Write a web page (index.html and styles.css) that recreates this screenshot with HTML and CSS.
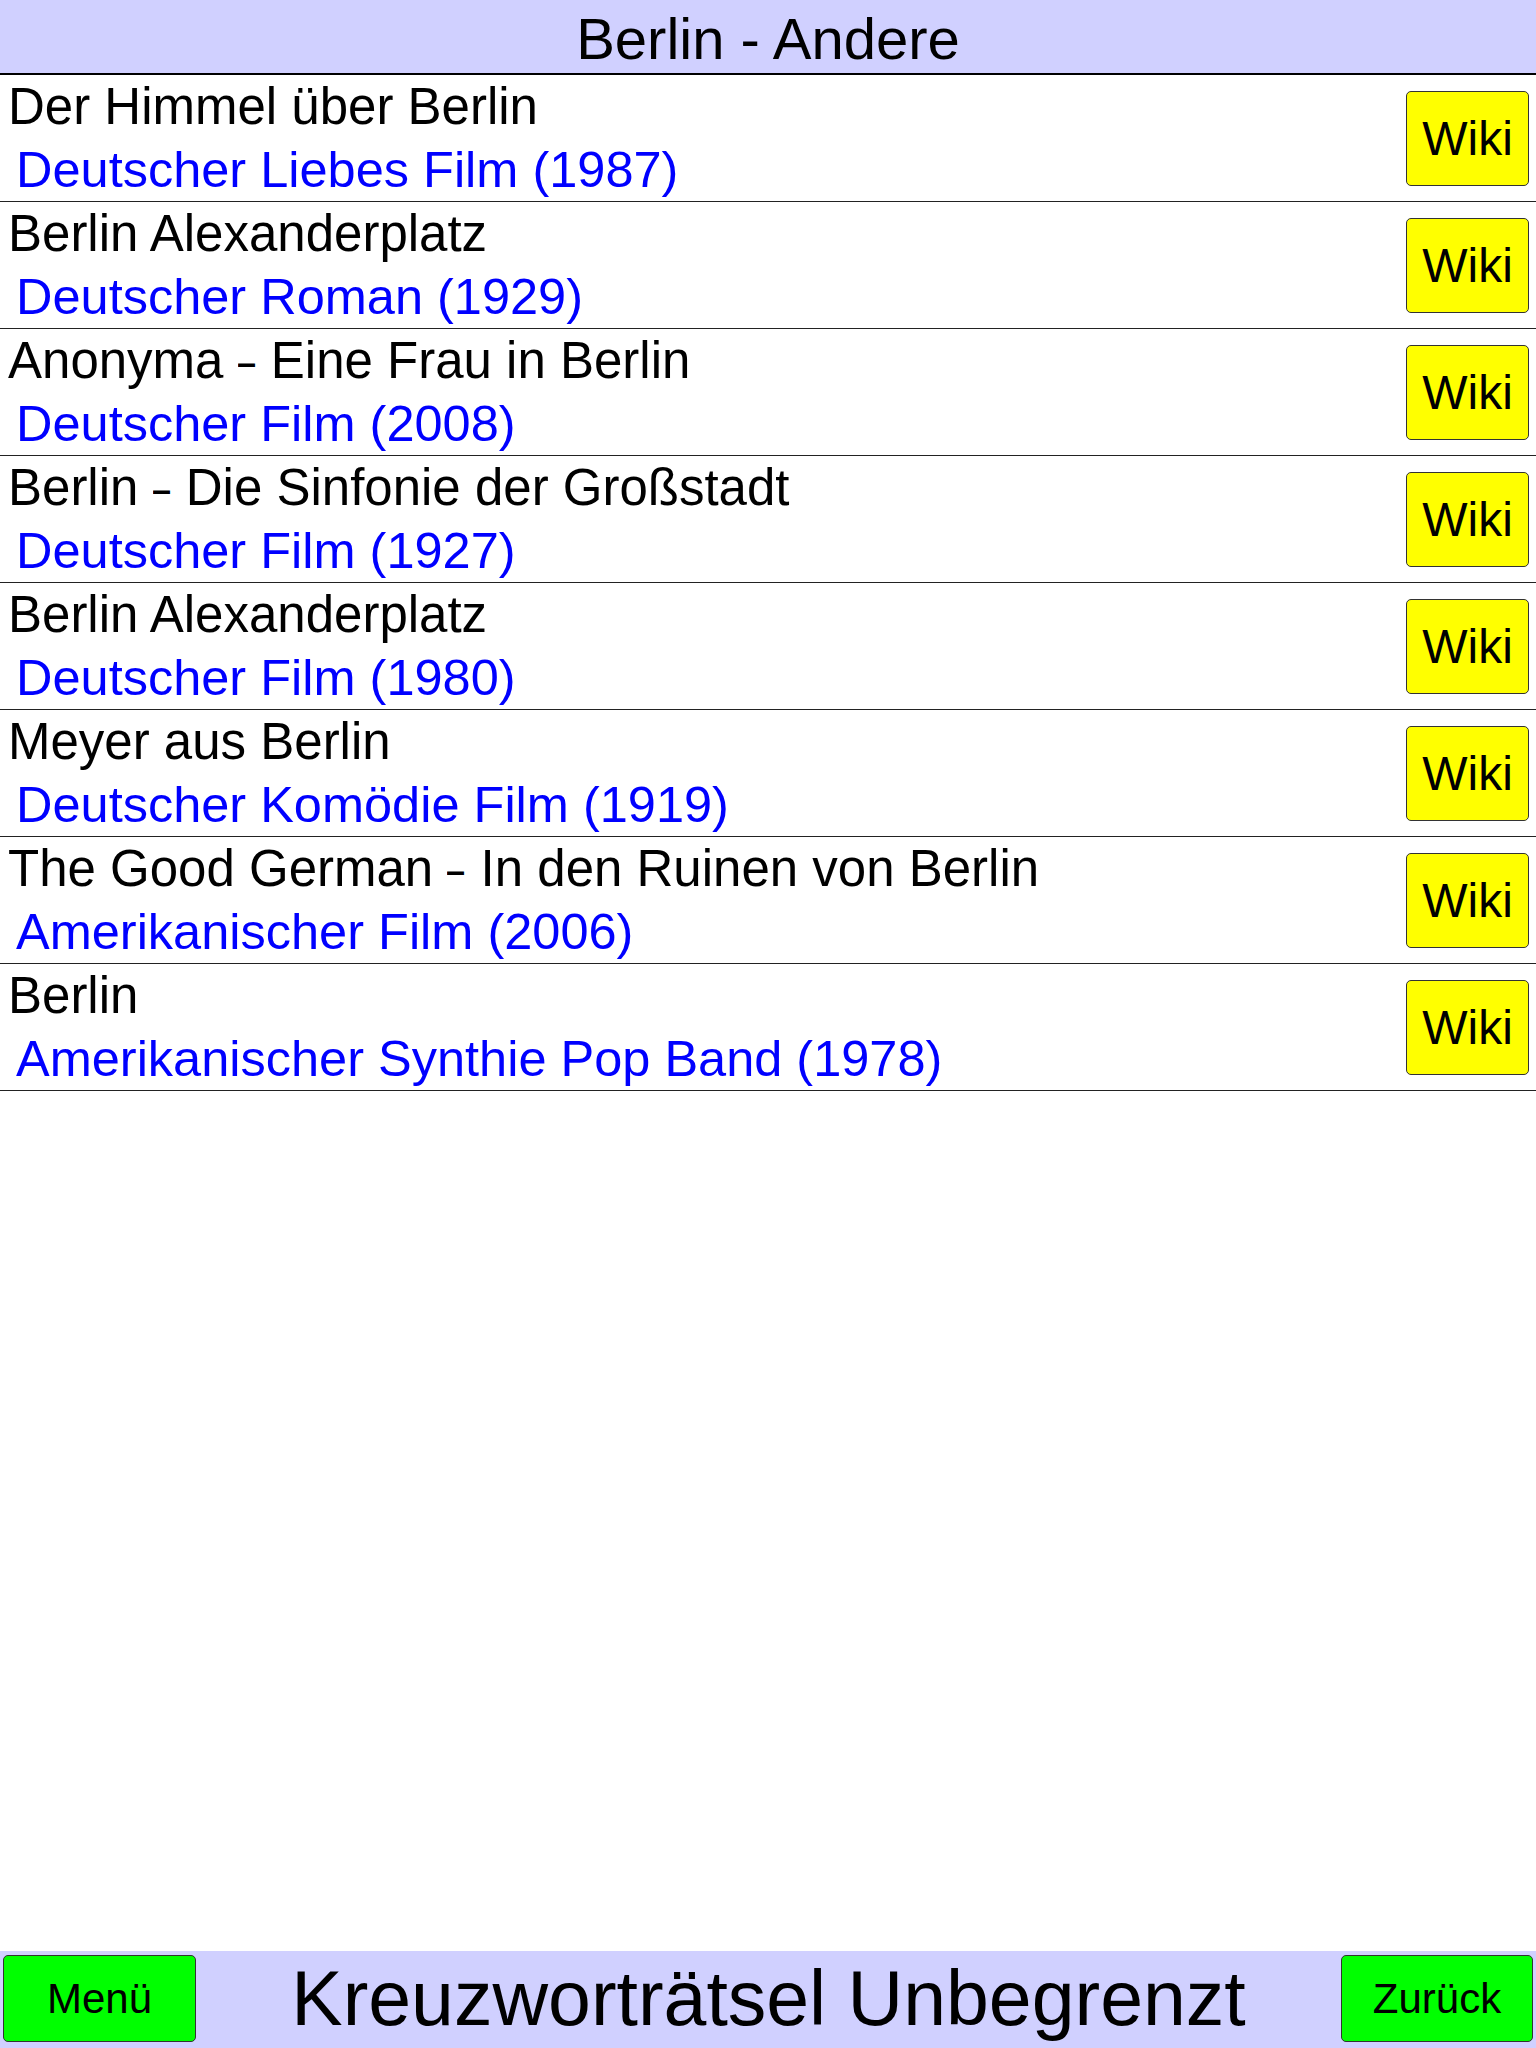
FILE: index.html
```html
<!DOCTYPE html>
<html lang="de">
<head>
    <meta charset="UTF-8">
    <meta name="viewport" content="width=device-width, initial-scale=1.0">
    <title>Berlin - Andere</title>
    <link rel="stylesheet" href="styles.css">
</head>
<body>
    <div class="page">
        <div class="top-bar">Berlin - Andere</div>

        <div class="entry-list">
            <div class="entry">
                <div class="entry-text">
                    <div class="entry-title">Der Himmel über Berlin</div>
                    <div class="entry-info">Deutscher Liebes Film (1987)</div>
                </div>
                <button class="wiki-button">Wiki</button>
            </div>
            <div class="entry">
                <div class="entry-text">
                    <div class="entry-title">Berlin Alexanderplatz</div>
                    <div class="entry-info">Deutscher Roman (1929)</div>
                </div>
                <button class="wiki-button">Wiki</button>
            </div>
            <div class="entry">
                <div class="entry-text">
                    <div class="entry-title">Anonyma <span class="dash">–</span> Eine Frau in Berlin</div>
                    <div class="entry-info">Deutscher Film (2008)</div>
                </div>
                <button class="wiki-button">Wiki</button>
            </div>
            <div class="entry">
                <div class="entry-text">
                    <div class="entry-title">Berlin <span class="dash">–</span> Die Sinfonie der Großstadt</div>
                    <div class="entry-info">Deutscher Film (1927)</div>
                </div>
                <button class="wiki-button">Wiki</button>
            </div>
            <div class="entry">
                <div class="entry-text">
                    <div class="entry-title">Berlin Alexanderplatz</div>
                    <div class="entry-info">Deutscher Film (1980)</div>
                </div>
                <button class="wiki-button">Wiki</button>
            </div>
            <div class="entry">
                <div class="entry-text">
                    <div class="entry-title">Meyer aus Berlin</div>
                    <div class="entry-info">Deutscher Komödie Film (1919)</div>
                </div>
                <button class="wiki-button">Wiki</button>
            </div>
            <div class="entry">
                <div class="entry-text">
                    <div class="entry-title">The Good German <span class="dash">–</span> In den Ruinen von Berlin</div>
                    <div class="entry-info">Amerikanischer Film (2006)</div>
                </div>
                <button class="wiki-button">Wiki</button>
            </div>
            <div class="entry">
                <div class="entry-text">
                    <div class="entry-title">Berlin</div>
                    <div class="entry-info">Amerikanischer Synthie Pop Band (1978)</div>
                </div>
                <button class="wiki-button">Wiki</button>
            </div>
        </div>

        <div class="bottom-bar">
            <button class="nav-button">Menü</button>
            <div class="app-title">Kreuzworträtsel Unbegrenzt</div>
            <button class="nav-button">Zurück</button>
        </div>
    </div>
</body>
</html>
```

FILE: styles.css
```css
body {
    font-family: "Liberation Sans", Arial, sans-serif;
    margin: 0;
    padding: 0;
    background-color: white;
    color: black;
    overflow: hidden;
}

.page {
    height: 100vh;
    display: flex;
    flex-direction: column;
}

.top-bar {
    height: 71px;
    padding-top: 2px;
    line-height: 73px;
    font-size: 58px;
    text-align: center;
    background: #d0d0ff;
    border-bottom: 2px solid black;
}

.entry-list {
    flex-grow: 1;
}

.entry {
    display: flex;
    align-items: center;
    height: 127px;
    box-sizing: border-box;
    border-bottom: 1px solid #222;
    padding: 0 7px 0 8px;
}

.entry-text {
    flex-grow: 1;
    align-self: flex-start;
    white-space: nowrap;
}

.entry-title {
    font-size: 51px;
    line-height: 64px;
}

.dash {
    display: inline-block;
    width: 19px;
    transform: scaleX(0.6);
    transform-origin: left center;
}

.entry-info {
    font-size: 50.5px;
    line-height: 60px;
    margin-top: 1px;
    padding-left: 8px;
    color: #0000ff;
}

.wiki-button {
    width: 123px;
    height: 95px;
    padding: 0;
    background: #ffff00;
    border: 1px solid #333;
    border-radius: 5px;
    font-family: "Liberation Sans", Arial, sans-serif;
    font-size: 48px;
    color: black;
}

.bottom-bar {
    display: grid;
    grid-template-columns: 193px 1fr 192px;
    align-items: center;
    height: 97px;
    box-sizing: border-box;
    padding: 4px 3px 6px 3px;
    background: #d0d0ff;
}

.nav-button {
    height: 87px;
    padding: 0;
    background: #00ff00;
    border: 1px solid #333;
    border-radius: 5px;
    font-family: "Liberation Sans", Arial, sans-serif;
    font-size: 42px;
    color: black;
}

.app-title {
    font-size: 77px;
    line-height: 1;
    text-align: center;
    white-space: nowrap;
}
```
